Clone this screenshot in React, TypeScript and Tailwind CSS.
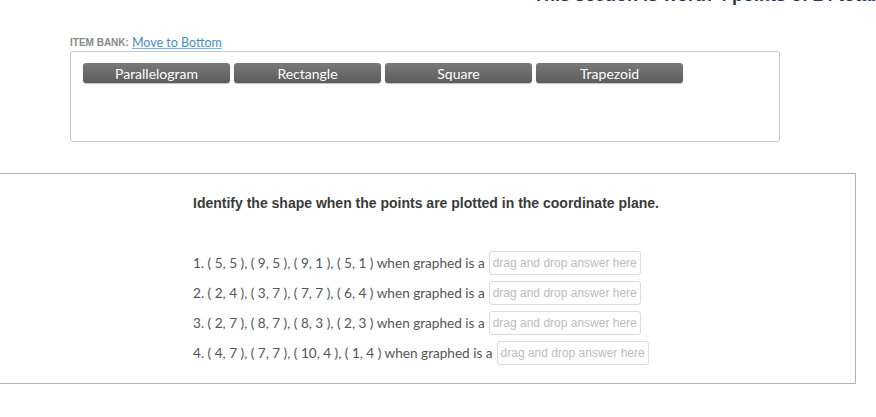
import React from 'react';

const shapes = ['Parallelogram', 'Rectangle', 'Square', 'Trapezoid'];

const questions = [
  '1. ( 5, 5 ), ( 9, 5 ), ( 9, 1 ), ( 5, 1 ) when graphed is a',
  '2. ( 2, 4 ), ( 3, 7 ), ( 7, 7 ), ( 6, 4 ) when graphed is a',
  '3. ( 2, 7 ), ( 8, 7 ), ( 8, 3 ), ( 2, 3 ) when graphed is a',
  '4. ( 4, 7 ), ( 7, 7 ), ( 10, 4 ), ( 1, 4 ) when graphed is a',
];

const DropBox: React.FC = () => (
  <span className="ml-[4px] inline-flex h-[24px] w-[152px] items-center justify-center rounded-[3px] border border-[#dcdcdc] font-['Liberation_Sans',Arial,sans-serif] text-[12px] text-[#bcbcbc]">
    drag and drop answer here
  </span>
);

export default function App() {
  return (
    <div className="relative h-[417px] w-[876px] overflow-hidden bg-white font-['Lato','Open_Sans',sans-serif]">
      {/* Section header, mostly scrolled out of view */}
      <div className="-mt-[14px] h-[18px] pl-[533px] whitespace-nowrap font-['Liberation_Sans',Arial,sans-serif] text-[18px] font-bold leading-[18px] text-[#2a3550]">
        This section is worth 4 points of 24 total
      </div>

      {/* Item bank */}
      <div className="ml-[70px] mt-[32px] w-[710px]">
        <div className="flex h-[14px] items-end gap-[3px]">
          <span className="font-['Liberation_Sans',Arial,sans-serif] text-[10px] font-bold text-[#888]">ITEM BANK:</span>
          <a className="text-[12.5px] leading-[14px] text-[#4a8db8] underline decoration-[#8ab4d0]">Move to Bottom</a>
        </div>
        <div className="mt-[1px] h-[91px] rounded-[3px] border border-[#c8c8c8] px-[12px] pt-[11px]">
          <div className="flex gap-[4px]">
            {shapes.map((s) => (
              <div
                key={s}
                className="flex h-[20px] w-[147px] items-center justify-center rounded-[3px] bg-gradient-to-b from-[#7a7a7a] to-[#5c5c5c] text-[14px] text-white shadow-[0_1px_1px_rgba(0,0,0,0.25)]"
              >
                {s}
              </div>
            ))}
          </div>
        </div>
      </div>

      {/* Question */}
      <div className="-ml-[2px] mt-[31px] h-[211px] w-[858px] border border-[#b4b4b4] pl-[194px] pt-[20px]">
        <p className="font-['Liberation_Sans',Arial,sans-serif] text-[14px] font-bold leading-[18px] text-[#3a3a3a]">
          Identify the shape when the points are plotted in the coordinate plane.
        </p>
        <div className="mt-[39px] flex flex-col gap-[6px]">
          {questions.map((q) => (
            <div key={q} className="flex h-[24px] items-center text-[13.6px] text-[#555]">
              <span>{q}</span>
              <DropBox />
            </div>
          ))}
        </div>
      </div>
    </div>
  );
}
